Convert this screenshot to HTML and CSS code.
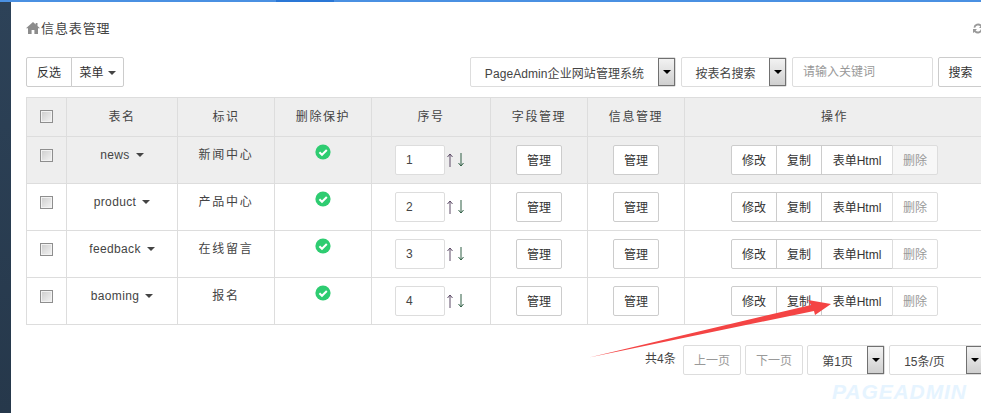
FILE: index.html
```html
<!DOCTYPE html>
<html lang="zh">
<head>
<meta charset="utf-8">
<title>信息表管理</title>
<link rel="stylesheet" href="styles.css">
</head>
<body>
<div class="topbar"><div class="topbar-dark"></div></div>
<div class="shell">
<aside class="side"></aside>
<main class="main">
  <header class="head">
    <svg class="home" viewBox="0 0 14 12"><path d="M7 0 0 6.2h2V12h3.600V8h2.800v4H12V6.200h2L11.500 4V1H9.700v1.400z"/></svg>
    <span class="title">信息表管理</span>
    <svg class="refresh" viewBox="0 0 12 12"><path d="M1.500 5A4.600 4.600 0 0 1 9.500 2.600L11 1.500V5.500H7L8.400 4A3 3 0 0 0 3.200 5.200zM10.500 7A4.600 4.600 0 0 1 2.500 9.400L1 10.500V6.500H5L3.600 8A3 3 0 0 0 8.800 6.800z"/></svg>
  </header>
  <div class="toolbar">
    <div class="btn-group">
      <button class="btn btn-invert">反选</button>
      <button class="btn btn-menu">菜单<i class="caret"></i></button>
    </div>
    <div class="filters">
      <div class="select sel-site"><span>PageAdmin企业网站管理系统</span><b class="arrow"><i></i></b></div>
      <div class="select sel-type"><span>按表名搜索</span><b class="arrow"><i></i></b></div>
      <div class="search-input">请输入关键词</div>
      <button class="btn btn-search">搜索</button>
    </div>
  </div>
  <table class="grid">
    <colgroup><col class="c1"><col class="c2"><col class="c3"><col class="c4"><col class="c5"><col class="c6"><col class="c7"><col class="c8"></colgroup>
    <thead>
      <tr><th class="h-check"><span class="check"></span></th><th>表名</th><th>标识</th><th>删除保护</th><th>序号</th><th>字段管理</th><th>信息管理</th><th>操作</th></tr>
    </thead>
    <tbody id="rows">
      <tr class="hi">
        <td class="t-check"><span class="check"></span></td><td class="t-top name">news<i class="caret"></i></td><td class="t-top wide">新闻中心</td>
        <td class="t-top"><svg class="ok" viewBox="0 0 16 16"><circle cx="8" cy="8" r="7.600"/><path d="M4.400 8.200 7 10.800 11.800 6"/></svg></td>
        <td><div class="order"><span class="num">1</span><svg class="mv mv-up" viewBox="0 0 8 14"><path d="M4 14V1M1.500 4 4 1l2.500 3"/></svg><svg class="mv mv-down" viewBox="0 0 8 14"><path d="M4 0v13M1.500 10 4 13l2.500-3"/></svg></div></td>
        <td><button class="btn btn-m">管理</button></td><td><button class="btn btn-m">管理</button></td>
        <td><div class="btn-group ops"><button class="btn op">修改</button><button class="btn op">复制</button><button class="btn op-html">表单Html</button><button class="btn op dis">删除</button></div></td>
      </tr>
      <tr>
        <td class="t-check"><span class="check"></span></td><td class="t-top name">product<i class="caret"></i></td><td class="t-top wide">产品中心</td>
        <td class="t-top"><svg class="ok" viewBox="0 0 16 16"><circle cx="8" cy="8" r="7.600"/><path d="M4.400 8.200 7 10.800 11.800 6"/></svg></td>
        <td><div class="order"><span class="num">2</span><svg class="mv mv-up" viewBox="0 0 8 14"><path d="M4 14V1M1.500 4 4 1l2.500 3"/></svg><svg class="mv mv-down" viewBox="0 0 8 14"><path d="M4 0v13M1.500 10 4 13l2.500-3"/></svg></div></td>
        <td><button class="btn btn-m">管理</button></td><td><button class="btn btn-m">管理</button></td>
        <td><div class="btn-group ops"><button class="btn op">修改</button><button class="btn op">复制</button><button class="btn op-html">表单Html</button><button class="btn op dis">删除</button></div></td>
      </tr>
      <tr>
        <td class="t-check"><span class="check"></span></td><td class="t-top name">feedback<i class="caret"></i></td><td class="t-top wide">在线留言</td>
        <td class="t-top"><svg class="ok" viewBox="0 0 16 16"><circle cx="8" cy="8" r="7.600"/><path d="M4.400 8.200 7 10.800 11.800 6"/></svg></td>
        <td><div class="order"><span class="num">3</span><svg class="mv mv-up" viewBox="0 0 8 14"><path d="M4 14V1M1.500 4 4 1l2.500 3"/></svg><svg class="mv mv-down" viewBox="0 0 8 14"><path d="M4 0v13M1.500 10 4 13l2.500-3"/></svg></div></td>
        <td><button class="btn btn-m">管理</button></td><td><button class="btn btn-m">管理</button></td>
        <td><div class="btn-group ops"><button class="btn op">修改</button><button class="btn op">复制</button><button class="btn op-html">表单Html</button><button class="btn op dis">删除</button></div></td>
      </tr>
      <tr>
        <td class="t-check"><span class="check"></span></td><td class="t-top name">baoming<i class="caret"></i></td><td class="t-top wide">报名</td>
        <td class="t-top"><svg class="ok" viewBox="0 0 16 16"><circle cx="8" cy="8" r="7.600"/><path d="M4.400 8.200 7 10.800 11.800 6"/></svg></td>
        <td><div class="order"><span class="num">4</span><svg class="mv mv-up" viewBox="0 0 8 14"><path d="M4 14V1M1.500 4 4 1l2.500 3"/></svg><svg class="mv mv-down" viewBox="0 0 8 14"><path d="M4 0v13M1.500 10 4 13l2.500-3"/></svg></div></td>
        <td><button class="btn btn-m">管理</button></td><td><button class="btn btn-m">管理</button></td>
        <td><div class="btn-group ops"><button class="btn op">修改</button><button class="btn op">复制</button><button class="btn op-html">表单Html</button><button class="btn op dis">删除</button></div></td>
      </tr>
    </tbody>
  </table>
  <div class="pager">
    <span class="total">共4条</span>
    <button class="btn page dis">上一页</button>
    <button class="btn page dis">下一页</button>
    <div class="select sel-page"><span>第1页</span><b class="arrow"><i></i></b></div>
    <div class="select sel-size"><span>15条/页</span><b class="arrow"><i></i></b></div>
  </div>
</main>
</div>
<div class="watermark">PAGEADMIN</div>
<svg class="annot" viewBox="0 0 981 413"><path d="M589 357.500 811 305 808 300 831 304 815 315 814 311z"/></svg>
</body>
</html>
```
FILE: styles.css
```css
* { box-sizing: border-box; }
html, body { margin: 0; height: 413px; overflow: hidden; background: #fff; }
body { font-family: "Liberation Sans", "Noto Sans CJK SC", sans-serif; font-size: 12px; color: #444; position: relative; }
button { font: inherit; }
.topbar { height: 2px; background: #4a90e2; }
.topbar-dark { width: 58px; height: 2px; margin-left: 276px; background: #2a77d6; }
.shell { display: flex; height: 411px; }
.side { width: 11px; flex: none; background: linear-gradient(#2d4258, #26384b); }
.main { width: 1000px; flex: none; padding-left: 15px; }
.head { height: 55px; padding-top: 17px; display: flex; align-items: flex-start; position: relative; }
.home { width: 14px; height: 12px; margin-top: 3px; fill: #8c8c8c; }
.title { margin-left: 1px; font-size: 13px; letter-spacing: .9px; line-height: 19px; color: #444; }
.refresh { position: absolute; left: 946px; top: 20px; width: 12px; height: 13px; fill: #999; }
.toolbar { height: 40px; display: flex; justify-content: space-between; }
.btn { height: 30px; padding: 0 0 1px; background: #fff; border: 1px solid #ccc; border-radius: 2px; color: #333; font-size: 12px; }
.btn-group { display: flex; height: 30px; }
.btn-group .btn { border-radius: 0; margin-left: -1px; }
.btn-group .btn:first-child { border-radius: 2px 0 0 2px; margin-left: 0; }
.btn-group .btn:last-child { border-radius: 0 2px 2px 0; }
.btn-invert { width: 46px; }
.btn-menu { width: 53px; }
.caret { display: inline-block; width: 0; height: 0; margin-left: 4px; vertical-align: 2px; border-top: 4px solid #444; border-left: 4px solid transparent; border-right: 4px solid transparent; }
.filters { display: flex; width: 541px; gap: 5px; flex: none; }
.select { height: 30px; display: flex; align-items: center; border: 1px solid #ddd; border-radius: 2px; background: #fff; font-size: 12px; color: #444; }
.select span { flex: 1; text-align: center; }
.arrow { width: 17px; height: 28px; flex: none; border: 1px solid #707070; background: linear-gradient(#f2f2f2, #cfcfcf); display: flex; align-items: center; justify-content: center; }
.arrow i { width: 0; height: 0; border-top: 4px solid #000; border-left: 4px solid transparent; border-right: 4px solid transparent; }
.sel-site { width: 206px; letter-spacing: .08px; }
.sel-type { width: 106px; }
.search-input { width: 141px; height: 30px; border: 1px solid #ddd; border-radius: 2px; padding-left: 10px; line-height: 28px; color: #999; }
.btn-search { width: 60px; flex: none; padding-right: 15px; }
.grid { width: 958px; table-layout: fixed; border-collapse: collapse; }
.c1 { width: 40px; } .c2 { width: 111px; } .c3 { width: 97px; } .c4 { width: 97px; }
.c5 { width: 119px; } .c6 { width: 97px; } .c7 { width: 97px; } .c8 { width: 300px; }
.grid th, .grid td { border: 1px solid #ddd; text-align: center; padding: 0; }
.grid th { height: 39px; padding-bottom: 3px; background: #eee; font-weight: normal; letter-spacing: 1.600px; color: #444; }
.grid th.h-check { padding-bottom: 2px; }
.grid td { height: 47px; }
.grid tr.hi td { background: #eee; }
.grid td.t-top { vertical-align: top; padding-top: 11px; line-height: 15px; }
.grid td.name { letter-spacing: .35px; }
.grid td.name .caret { margin-left: 6px; }
.grid td.wide { letter-spacing: 1.800px; }
.grid td.t-check { padding-bottom: 10px; }
.check { display: inline-block; width: 13px; height: 13px; vertical-align: middle; border: 1px solid #8e8e8e; background: linear-gradient(135deg, #ccc, #f4f4f4); box-shadow: inset 0 0 0 1px #f2f2f2; }
.ok { width: 16px; height: 16px; display: inline-block; margin-top: -4px; vertical-align: top; }
.ok circle { fill: #2ecc71; }
.ok path { fill: none; stroke: #fff; stroke-width: 2; }
.order { display: flex; align-items: center; margin-left: 23px; }
.num { width: 50px; height: 30px; border: 1px solid #ddd; border-radius: 2px; background: #fff; text-align: left; padding-left: 10px; line-height: 28px; }
.mv { width: 8px; height: 14px; fill: none; stroke-width: 1; }
.mv-up { margin-left: 1px; stroke: #5c4a66; }
.mv-down { margin-left: 3px; stroke: #2f5f45; }
.btn-m { width: 46px; }
.ops { justify-content: flex-start; margin-left: 46px; }
.op { width: 46px; }
.op-html { width: 72px; margin-left: -1px; background: #fff; border: 1px solid #ccc; height: 30px; padding: 0 0 1px; font-size: 12px; color: #333; }
.btn.dis { color: #999; border-color: #ddd; }
.grid tr.hi .btn.dis { background: #f7f7f7; }
.pager { display: flex; margin-top: 20px; padding-left: 619px; gap: 4px; }
.total { width: 34px; line-height: 28px; color: #444; }
.page { width: 58px; }
.sel-page { width: 78px; }
.sel-size { width: 95px; flex: none; }
.sel-size span { padding-right: 7px; }
.watermark { position: absolute; left: 832px; top: 380px; font-family: "Liberation Sans", sans-serif; font-weight: bold; font-style: italic; font-size: 21px; letter-spacing: .9px; color: #e6f4ff; }
.annot { position: absolute; left: 0; top: 0; width: 981px; height: 413px; fill: #f44444; pointer-events: none; }
```
